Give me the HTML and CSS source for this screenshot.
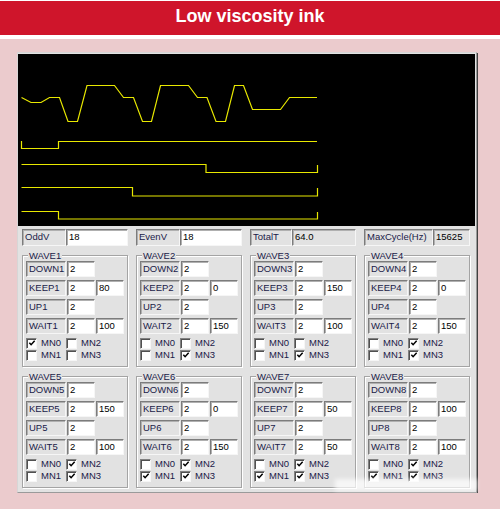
FILE: index.html
```html
<!DOCTYPE html>
<html lang="en">
<head>
  <meta charset="UTF-8">
  <title>Low viscosity ink</title>
  <link rel="stylesheet" href="styles.css">
</head>
<body>
  <div class="banner">Low viscosity ink</div>

  <div class="stage">
    <div class="window">
      <div class="scope">
        <svg width="457" height="172" viewBox="18 54 457 172">
          <g fill="none" stroke="#e8e800" stroke-width="1.2">
            <path d="M21.5 97.5 L31 102.5 L41 102.5 L49.5 97.5 L59.5 97.5 L68 121.5 L77.5 121.5 L87 85.5 L114.5 85.5 L123.5 97.5 L133.5 97.5 L142.5 121.5 L151.5 121.5 L160.5 85.5 L188.5 85.5 L197.5 97.5 L207 97.5 L216 121.5 L225.5 121.5 L234.5 85.5 L243.5 85.5 L252.5 109.5 L280.5 109.5 L289.5 97.5 L317 97.5"/>
            <path d="M21.5 141 V148.5 H58.5 V141.5 H317"/>
            <path d="M21.5 164.5 H206 V172.5 H317.5 V165"/>
            <path d="M21.5 187.5 H132.5 V196 H317.5 V188"/>
            <path d="M21.5 211.5 H58.5 V219 H317.5 V212"/>
          </g>
        </svg>
      </div>

      <div class="fields">
        <div class="field"><span class="cap">OddV</span><span class="box">18</span></div>
        <div class="field"><span class="cap">EvenV</span><span class="box">18</span></div>
        <div class="field"><span class="cap cap-mid">TotalT</span><span class="box box-ro">64.0</span></div>
        <div class="field"><span class="cap cap-wide">MaxCycle(Hz)</span><span class="box box-ro">15625</span></div>
      </div>

      <div class="waves" id="waves"></div>

      <div class="smudge"></div>
    </div>
  </div>

  <script>
    // keep / wait second values and MN0..MN3 flags per wave
    const waves = [
      { keep: 80,  wait: 100, mn: [1, 0, 0, 0] },
      { keep: 0,   wait: 150, mn: [0, 0, 0, 1] },
      { keep: 150, wait: 100, mn: [0, 0, 0, 1] },
      { keep: 0,   wait: 150, mn: [0, 0, 1, 1] },
      { keep: 150, wait: 100, mn: [0, 0, 1, 1] },
      { keep: 0,   wait: 150, mn: [0, 1, 1, 1] },
      { keep: 50,  wait: 50,  mn: [0, 1, 1, 1] },
      { keep: 100, wait: 100, mn: [0, 1, 1, 1] }
    ];

    function param(name, values) {
      let html = `<div class="param"><span class="cap">${name}</span>`;
      for (const v of values) html += `<span class="box">${v}</span>`;
      return html + '</div>';
    }

    function check(i, on) {
      return `<label class="check"><span class="chk${on ? ' on' : ''}"></span>MN${i}</label>`;
    }

    const root = document.getElementById('waves');
    waves.forEach((w, idx) => {
      const n = idx + 1;
      root.insertAdjacentHTML('beforeend', `
        <div class="group">
          <div class="group-title">WAVE${n}</div>
          <div class="params">
            ${param('DOWN' + n, [2])}
            ${param('KEEP' + n, [2, w.keep])}
            ${param('UP' + n, [2])}
            ${param('WAIT' + n, [2, w.wait])}
          </div>
          <div class="checks">
            ${check(0, w.mn[0])}${check(2, w.mn[2])}
            ${check(1, w.mn[1])}${check(3, w.mn[3])}
          </div>
        </div>`);
    });
  </script>
</body>
</html>
```

FILE: styles.css
```css
* {
  box-sizing: border-box;
}

body {
  margin: 0;
  background: #ebcbcd;
  font-family: "Liberation Sans", Arial, sans-serif;
}

.banner {
  height: 39px;
  border-top: 1px solid #fff;
  border-bottom: 4px solid #fff;
  background: #cf152b;
  color: #fff;
  font-size: 18px;
  font-weight: bold;
  line-height: 30px;
  text-align: center;
}

.stage {
  padding: 13px 0 0 17px;
}

.window {
  position: relative;
  width: 460px;
  padding: 1px 0 4px;
  background: #e2e2e2;
  border: 1px solid;
  border-color: #d6d6d6 #9a9a9a #9a9a9a #d6d6d6;
  box-shadow: 1px 1px 0 #404040;
  font-size: 9.5px;
  color: #1a1a48;
}

.scope {
  width: 457px;
  height: 172px;
  background: #000;
}

.scope svg {
  display: block;
}

/* top row of read-outs */
.fields {
  display: grid;
  grid-template-columns: repeat(4, 106px);
  column-gap: 8px;
  margin: 3px 0 0 4px;
}

.field {
  display: flex;
  height: 17px;
}

.cap,
.box {
  display: block;
  height: 100%;
  padding: 0 2px;
  line-height: 14px;
  white-space: nowrap;
  border: 1px solid;
  border-color: #7c7c7c #f6f6f6 #f6f6f6 #7c7c7c;
  box-shadow: inset 1px 1px 0 #b0b0b0;
}

.cap {
  width: 40px;
  flex: none;
}

.field .cap {
  width: 44px;
}

.field .cap-mid {
  width: 42px;
}

.field .cap-wide {
  width: 69px;
}

.box {
  width: 28px;
  margin-left: 1px;
  background: #fff;
  color: #000;
}

.field .box {
  flex: 1;
  margin-left: 0;
}

.field .box-ro {
  background: #e2e2e2;
}

/* wave group boxes */
.waves {
  display: grid;
  grid-template-columns: repeat(4, 106px);
  gap: 9px 8px;
  margin: 9px 0 0 4px;
}

.group {
  height: 112px;
  padding: 0 3px 5px;
  border: 1px solid #a4a4a4;
  box-shadow: inset 1px 1px 0 #fff, 1px 1px 0 #fff;
}

.group-title {
  width: max-content;
  height: 11px;
  margin: -6px 0 0 2px;
  padding: 0 1px;
  line-height: 11px;
  background: #e2e2e2;
}

.params {
  display: flex;
  flex-direction: column;
  gap: 3px;
}

.param {
  display: flex;
  height: 16px;
}

.checks {
  display: grid;
  grid-template-columns: 40px 40px;
  grid-auto-rows: 12px;
  margin-top: 3px;
}

.check {
  display: flex;
  align-items: center;
  gap: 4px;
  line-height: 12px;
}

.chk {
  width: 11px;
  height: 11px;
  flex: none;
  background: #fff;
  border: 1px solid;
  border-color: #808080 #f6f6f6 #f6f6f6 #808080;
  box-shadow: inset 1px 1px 0 #505050;
}

.chk.on {
  background: #fff url("data:image/svg+xml,%3Csvg xmlns='http://www.w3.org/2000/svg' viewBox='0 0 9 9'%3E%3Cpath d='M1.5 4.2l2 2.2 4-4.4' fill='none' stroke='%23000' stroke-width='1.7'/%3E%3C/svg%3E") center / 8px 8px no-repeat;
}

.smudge {
  position: absolute;
  left: 317px;
  top: 426px;
  width: 142px;
  height: 12px;
  background: rgba(255, 255, 255, 0.7);
  filter: blur(2px);
}
```
